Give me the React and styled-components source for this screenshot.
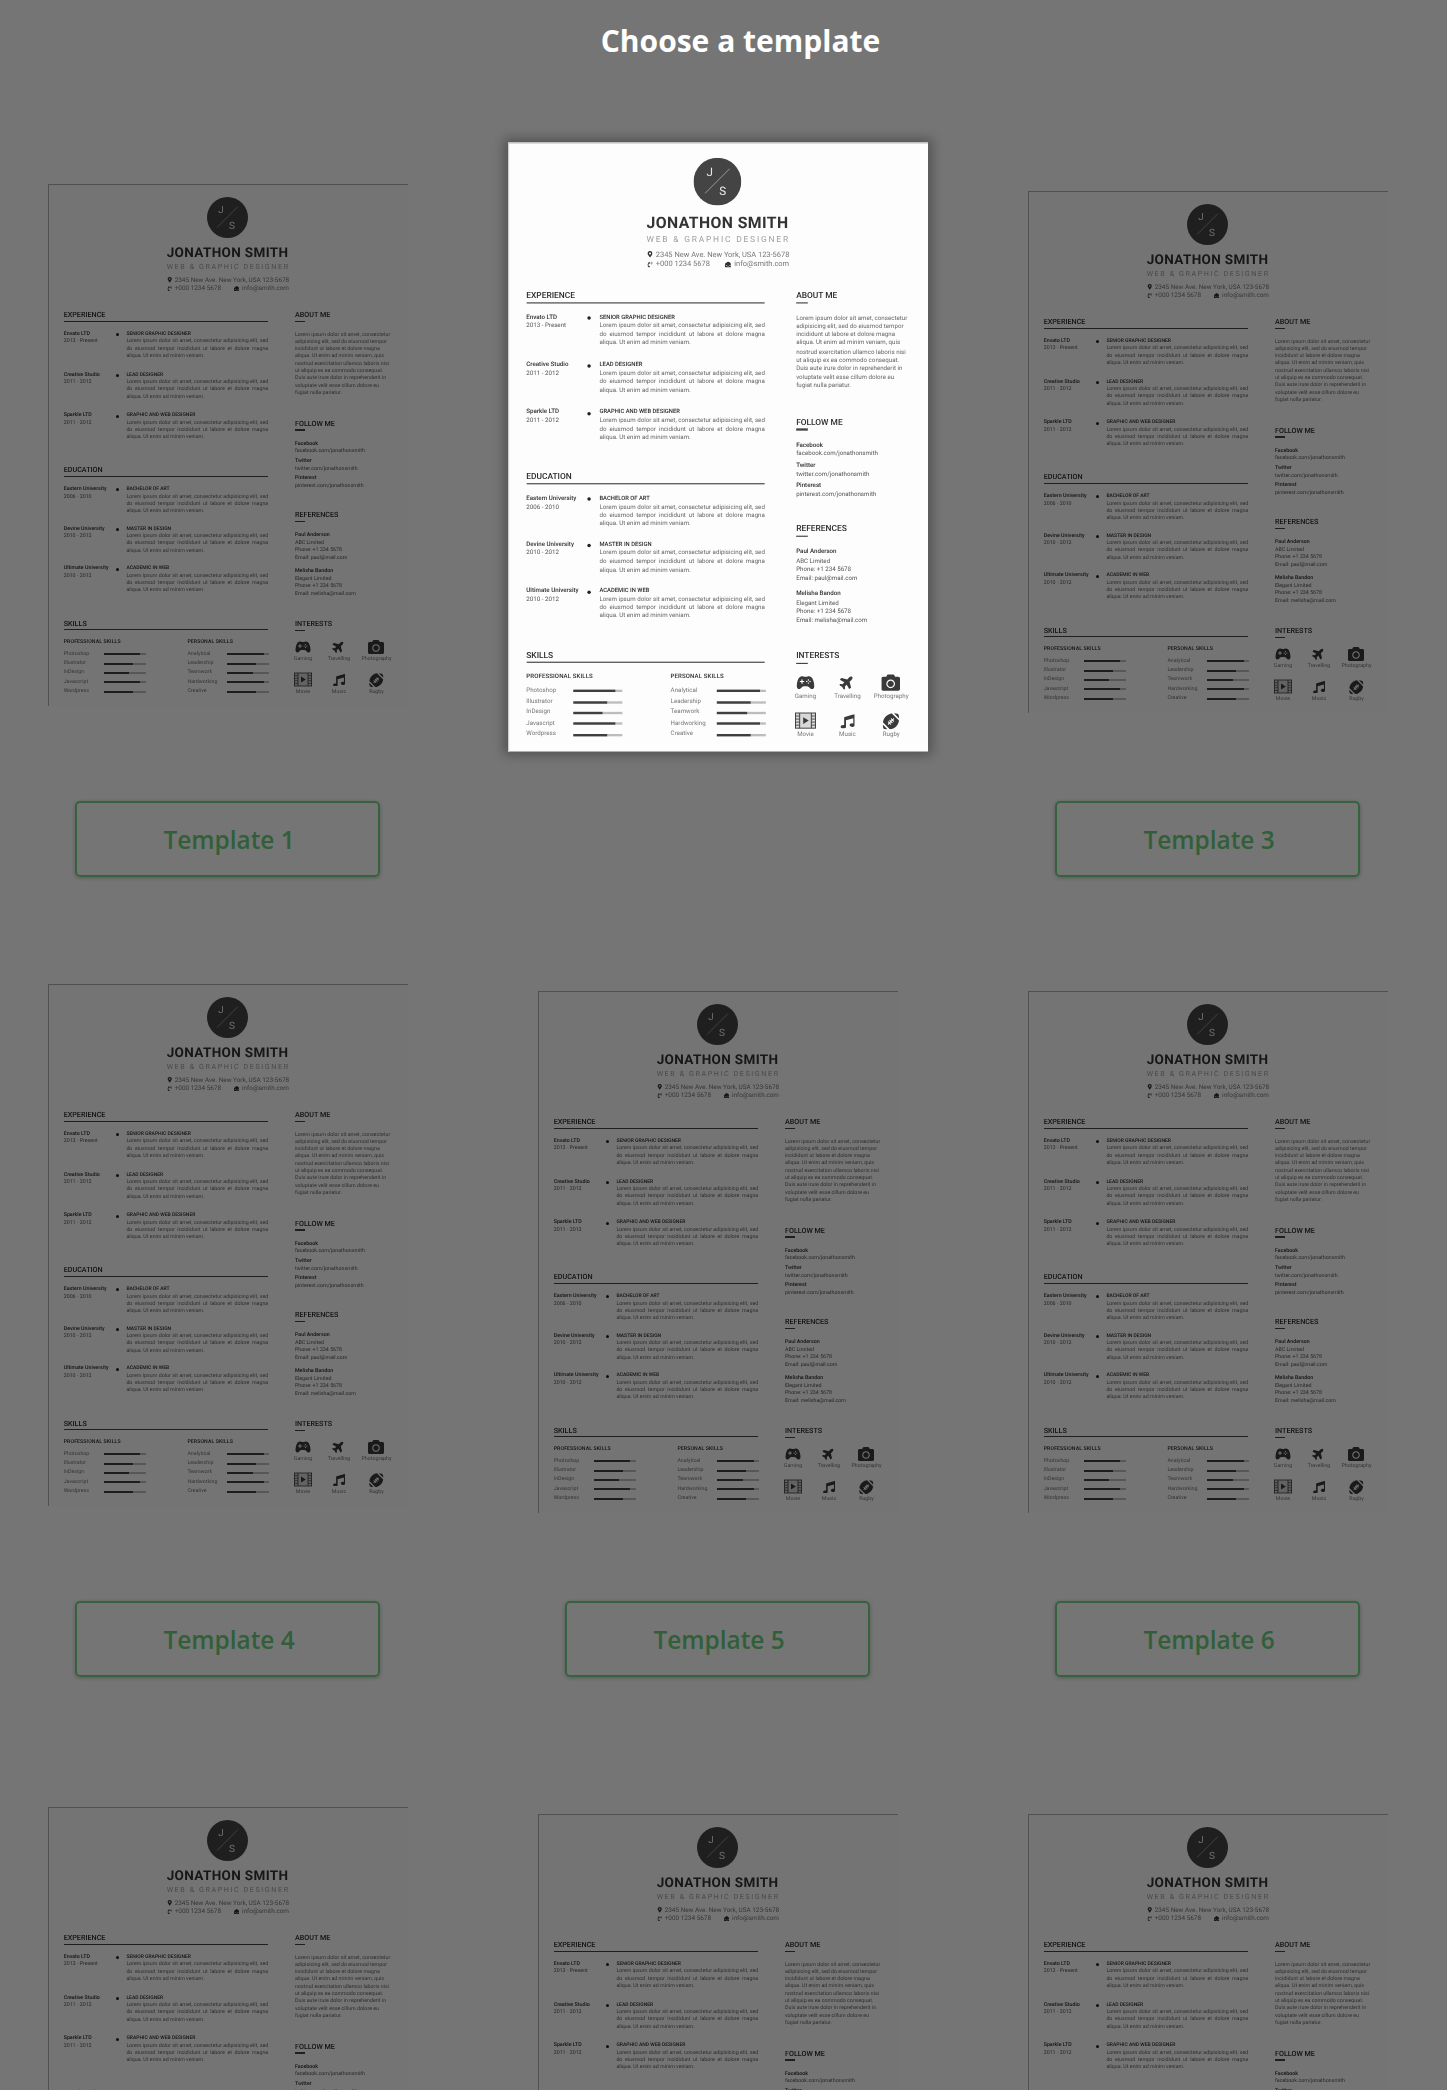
import React from 'react'
import styled, { createGlobalStyle } from 'styled-components'
import { FaCamera, FaFootballBall, FaMapMarkerAlt, FaMusic, FaPhoneVolume, FaPlane, FaEnvelopeOpen } from 'react-icons/fa'
import { IoGameController } from 'react-icons/io5'

const GlobalStyle = createGlobalStyle`
  html, body {
    margin: 0;
    padding: 0;
    background: #ffffff;
  }
`

// Page and dimmer
const Page = styled.div`
  position: relative;
  width: 1447px;
  height: 2090px;
  overflow: hidden;
  background: #ffffff;
  font-family: 'Open Sans', sans-serif;
`

const Dimmer = styled.div`
  position: absolute;
  inset: 0;
  z-index: 1;
  background: rgba(0, 0, 0, 0.54);
`

const Title = styled.h1`
  position: relative;
  z-index: 2;
  margin: 0;
  padding: 20px 0 0 34px;
  height: 41px;
  font-size: 30px;
  line-height: 41px;
  font-weight: 700;
  text-align: center;
  color: #ffffff;
`

const Gallery = styled.div`
  display: flex;
  flex-direction: column;
  gap: 107px;
  margin-top: 123px;
  padding-left: 48px;
`

const Row = styled.div`
  display: grid;
  grid-template-columns: repeat(3, 360px);
  column-gap: 130px;
  margin-top: ${(p) => (p.$late ? '23px' : '0')};
`

const Cell = styled.div`
  display: flex;
  flex-direction: column;
  align-items: center;
  height: 693px;
`

const PickButton = styled.button`
  box-sizing: border-box;
  width: 305px;
  height: 76px;
  margin-top: auto;
  margin-right: 1px;
  padding: 0 0 0 3px;
  border: 2px solid #74d886;
  border-radius: 5px;
  background: transparent;
  box-shadow: 0 1px 4px rgba(0, 0, 0, 0.25);
  font-family: 'Open Sans', sans-serif;
  font-size: 24.4px;
  font-weight: 600;
  color: #6ad07c;
`

// The resume sheet, drawn at 360x522
const Sheet = styled.div`
  position: relative;
  z-index: ${(p) => (p.$featured ? 2 : 0)};
  box-sizing: border-box;
  flex: none;
  width: 360px;
  height: 522px;
  margin-top: ${(p) => (p.$low ? '7px' : '0')};
  padding: 13.4px 0 0 15.7px;
  overflow: hidden;
  background: #fdfdfd;
  box-shadow: ${(p) =>
    p.$featured
      ? 'inset 1px 1px 0 #cfcfcf, 0 0 9px 3px rgba(0, 0, 0, 0.3)'
      : 'inset 1px 1px 0 #b0b0b0'};
  transform: ${(p) => (p.$featured ? 'translateY(-5px) scale(1.1667)' : 'none')};
  filter: blur(0.45px);
  font-family: Roboto, sans-serif;
  font-size: 5.3px;
  line-height: 7.3px;
  color: #555555;
  text-rendering: geometricPrecision;
`

const Header = styled.header`
  display: flex;
  flex-direction: column;
  width: 122.3px;
  margin-left: 103px;
`

const Logo = styled.svg`
  display: block;
  width: 41px;
  height: 41px;
  margin-left: 40.6px;
`

const Name = styled.div`
  margin-top: 7.6px;
  font-size: 13.5px;
  line-height: 14px;
  font-weight: 700;
  letter-spacing: 0.37px;
  white-space: nowrap;
  color: #333333;
`

const Role = styled.div`
  margin-top: 2.7px;
  font-size: 7.2px;
  line-height: 8px;
  font-weight: 400;
  letter-spacing: 1.56px;
  white-space: nowrap;
  color: #a0a0a0;
`

const ContactLine = styled.div`
  display: flex;
  justify-content: space-between;
  margin-top: ${(p) => (p.$first ? '5px' : '0')};
  font-size: 6.4px;
  line-height: 8.7px;
  color: #777777;
  white-space: nowrap;
`

const ContactItem = styled.span`
  display: flex;
  align-items: center;
  gap: 2.5px;

  svg {
    width: 5.5px;
    height: 5.5px;
    color: #333333;
  }
`

const Body = styled.div`
  display: grid;
  grid-template-columns: 204.5px 100px;
  column-gap: 26.8px;
  margin-top: 17px;
`

const Column = styled.div`
  display: flex;
  flex-direction: column;
`

const Section = styled.section`
  margin-bottom: ${(p) => p.$after || '0'};
`

const SectionHead = styled.h2`
  margin: 0 0 ${(p) => p.$space || '9.5px'};
  height: 10.5px;
  font-size: 7.2px;
  line-height: 9px;
  font-weight: 500;
  color: #2b2b2b;
  border-bottom: 1.5px solid #444444;
`

const ShortHead = styled(SectionHead)`
  position: relative;
  border-bottom: 0;
  height: 12px;

  &::after {
    content: '';
    position: absolute;
    left: 0;
    bottom: 0;
    width: 10px;
    height: 1.5px;
    background: #444444;
  }
`

const Job = styled.div`
  display: grid;
  grid-template-columns: 52px 10.7px 1fr;
  margin-bottom: ${(p) => p.$gap};

  &:last-child {
    margin-bottom: 0;
  }
`

const Bold = styled.div`
  font-weight: 500;
  color: #2e2e2e;
  white-space: nowrap;
`

const Dot = styled.i`
  display: block;
  width: 3px;
  height: 3px;
  margin-top: 2.15px;
  border-radius: 50%;
  background: #222222;
`

const JobTitle = styled(Bold)`
  font-size: 5px;
  text-transform: uppercase;
`

const TextLine = styled.div`
  color: #666666;
  white-space: nowrap;
  text-align: justify;
  text-align-last: ${(p) => (p.$fill ? 'justify' : 'left')};
`

const LinkItem = styled.div`
  margin-bottom: 1.9px;
  line-height: 7.7px;
`

const RefItem = styled.div`
  margin-bottom: 4.8px;
  line-height: 7.8px;
`

const SkillColumns = styled.div`
  display: grid;
  grid-template-columns: 123.7px 82px;
`

const SkillHead = styled(Bold)`
  margin-bottom: 3.5px;
  line-height: 7px;
  font-size: 5.2px;
  letter-spacing: 0.1px;
  text-transform: uppercase;
`

const SkillRow = styled.div`
  display: grid;
  grid-template-columns: 40px 42px;
  align-items: center;
  height: 9.3px;
  color: #777777;
`

const Bar = styled.div`
  height: 2px;
  background: #bdbdbd;

  &::before {
    content: '';
    display: block;
    width: ${(p) => p.$value}%;
    height: 100%;
    background: #3f3f3f;
  }
`

const Interests = styled.div`
  display: grid;
  grid-template-columns: 16px 56px 19px;
  grid-auto-rows: 33.4px;
  justify-items: center;
`

const Interest = styled.div`
  display: flex;
  flex-direction: column;
  align-items: center;
  gap: 2px;
  white-space: nowrap;
  color: #777777;
`

const IconBox = styled.div`
  display: flex;
  align-items: center;
  justify-content: center;
  width: 18px;
  height: 15px;
  color: #3a3a3a;

  svg {
    display: block;
    width: ${(p) => p.$size || 15}px;
    height: ${(p) => p.$size || 15}px;
  }
`

const jobs = [
  { place: 'Envato LTD', when: '2013 - Present', title: 'Senior Graphic Designer' },
  { place: 'Creative Studio', when: '2011 - 2012', title: 'Lead Designer' },
  { place: 'Sparkle LTD', when: '2011 - 2012', title: 'Graphic and Web Designer' },
]

const schools = [
  { place: 'Eastern University', when: '2006 - 2010', title: 'Bachelor of Art' },
  { place: 'Devine University', when: '2010 - 2012', title: 'Master in Design' },
  { place: 'Ultimate University', when: '2010 - 2012', title: 'Academic in Web' },
]

const jobLines = [
  'Lorem ipsum dolor sit amet, consectetur adipisicing elit, sed',
  'do eiusmod tempor incididunt ut labore et dolore magna',
  'aliqua. Ut enim ad minim veniam.',
]

const aboutLines = [
  'Lorem ipsum dolor sit amet, consectetur',
  'adipisicing elit, sed do eiusmod tempor',
  'incididunt ut labore et dolore magna',
  'aliqua. Ut enim ad minim veniam, quis',
  'nostrud exercitation ullamco laboris nisi',
  'ut aliquip ex ea commodo consequat.',
  'Duis aute irure dolor in reprehenderit in',
  'voluptate velit esse cillum dolore eu',
  'fugiat nulla pariatur.',
]

const links = [
  ['Facebook', 'facebook.com/jonathonsmith'],
  ['Twitter', 'twitter.com/jonathonsmith'],
  ['Pinterest', 'pinterest.com/jonathonsmith'],
]

const references = [
  ['Paul Anderson', 'ABC Limited', 'paul@mail.com'],
  ['Melisha Bandon', 'Elegant Limited', 'melisha@mail.com'],
]

const proSkills = [
  ['Photoshop', 87],
  ['Illustrator', 69],
  ['InDesign', 61],
  ['Javascript', 87],
  ['Wordpress', 69],
]

const softSkills = [
  ['Analytical', 87],
  ['Leadership', 69],
  ['Teamwork', 61],
  ['Hardworking', 87],
  ['Creative', 69],
]

function FilmIcon() {
  return (
    <svg viewBox="0 0 18 15" style={{ width: 18, height: 15 }}>
      <rect x="0.4" y="1" width="17.2" height="13" fill="#d8d8d8" stroke="currentColor" strokeWidth="0.8" />
      <path d="M4 1v13M14 1v13" stroke="currentColor" strokeWidth="0.8" />
      <path d="M0.4 3.6H4M0.4 6.2H4M0.4 8.8H4M0.4 11.4H4M14 3.6h3.6M14 6.2h3.6M14 8.8h3.6M14 11.4h3.6" stroke="currentColor" strokeWidth="0.7" />
      <path d="M7 4.6v5.8l4.8-2.9z" fill="currentColor" />
    </svg>
  )
}

const interests = [
  ['Gaming', <IoGameController key="g" />, 16],
  ['Travelling', <FaPlane key="t" style={{ transform: 'rotate(-45deg)' }} />, 13],
  ['Photography', <FaCamera key="p" />, 16],
  ['Movie', <FilmIcon key="m" />, 15],
  ['Music', <FaMusic key="u" />, 12.5],
  ['Rugby', <FaFootballBall key="r" />, 14.5],
]

function JobList({ items, gap }) {
  return items.map((item) => (
    <Job key={item.place} $gap={gap}>
      <div>
        <Bold>{item.place}</Bold>
        <div>{item.when}</div>
      </div>
      <Dot />
      <div>
        <JobTitle>{item.title}</JobTitle>
        {jobLines.map((line, i) => (
          <TextLine key={line} $fill={i < 2}>
            {line}
          </TextLine>
        ))}
      </div>
    </Job>
  ))
}

function SkillList({ heading, items }) {
  return (
    <div>
      <SkillHead>{heading}</SkillHead>
      {items.map(([label, value]) => (
        <SkillRow key={label}>
          <span>{label}</span>
          <Bar $value={value} />
        </SkillRow>
      ))}
    </div>
  )
}

function Resume({ featured, low }) {
  return (
    <Sheet $featured={featured} $low={low}>
      <Header>
        <Logo viewBox="0 0 41 41">
          <circle cx="20.5" cy="20.5" r="20.5" fill="#444444" />
          <line x1="31" y1="9.5" x2="10" y2="30.5" stroke="#d8d8d8" strokeWidth="0.5" />
          <text x="14" y="15.5" fill="#e8e8e8" fontSize="10" fontFamily="Roboto, sans-serif" textAnchor="middle">J</text>
          <text x="25" y="32" fill="#e8e8e8" fontSize="10" fontFamily="Roboto, sans-serif" textAnchor="middle">S</text>
        </Logo>
        <Name>JONATHON SMITH</Name>
        <Role>WEB &amp; GRAPHIC DESIGNER</Role>
        <ContactLine $first>
          <ContactItem>
            <FaMapMarkerAlt />
            2345 New Ave. New York, USA 123-5678
          </ContactItem>
        </ContactLine>
        <ContactLine>
          <ContactItem>
            <FaPhoneVolume />
            +000 1234 5678
          </ContactItem>
          <ContactItem>
            <FaEnvelopeOpen />
            info@smith.com
          </ContactItem>
        </ContactLine>
      </Header>

      <Body>
        <Column>
          <Section $after="23.65px">
            <SectionHead>EXPERIENCE</SectionHead>
            <JobList items={jobs} gap="11.5px" />
          </Section>
          <Section $after="24.2px">
            <SectionHead>EDUCATION</SectionHead>
            <JobList items={schools} gap="10.4px" />
          </Section>
          <Section>
            <SectionHead $space="9px">SKILLS</SectionHead>
            <SkillColumns>
              <SkillList heading="Professional Skills" items={proSkills} />
              <SkillList heading="Personal Skills" items={softSkills} />
            </SkillColumns>
          </Section>
        </Column>

        <Column>
          <Section $after="21.45px">
            <ShortHead>ABOUT ME</ShortHead>
            {aboutLines.map((line) => (
              <TextLine key={line}>{line}</TextLine>
            ))}
          </Section>
          <Section $after="17.5px">
            <ShortHead $space="10px">FOLLOW ME</ShortHead>
            {links.map(([site, url]) => (
              <LinkItem key={site}>
                <Bold>{site}</Bold>
                <div>{url}</div>
              </LinkItem>
            ))}
          </Section>
          <Section $after="15.2px">
            <ShortHead $space="9.8px">REFERENCES</ShortHead>
            {references.map(([name, company, mail]) => (
              <RefItem key={name}>
                <Bold>{name}</Bold>
                <div>{company}</div>
                <div>Phone: +1 234 5678</div>
                <div>Email: {mail}</div>
              </RefItem>
            ))}
          </Section>
          <Section>
            <ShortHead $space="8px">INTERESTS</ShortHead>
            <Interests>
              {interests.map(([label, icon, size]) => (
                <Interest key={label}>
                  <IconBox $size={size}>{icon}</IconBox>
                  <span>{label}</span>
                </Interest>
              ))}
            </Interests>
          </Section>
        </Column>
      </Body>
    </Sheet>
  )
}

export default function App() {
  return (
    <Page>
      <GlobalStyle />
      <Dimmer />
      <Title>Choose a template</Title>
      <Gallery>
        <Row>
          <Cell>
            <Resume />
            <PickButton>Template 1</PickButton>
          </Cell>
          <Cell>
            <Resume featured low />
          </Cell>
          <Cell>
            <Resume low />
            <PickButton>Template 3</PickButton>
          </Cell>
        </Row>
        <Row>
          <Cell>
            <Resume />
            <PickButton>Template 4</PickButton>
          </Cell>
          <Cell>
            <Resume low />
            <PickButton>Template 5</PickButton>
          </Cell>
          <Cell>
            <Resume low />
            <PickButton>Template 6</PickButton>
          </Cell>
        </Row>
        <Row $late>
          <Cell>
            <Resume />
          </Cell>
          <Cell>
            <Resume low />
          </Cell>
          <Cell>
            <Resume low />
          </Cell>
        </Row>
      </Gallery>
    </Page>
  )
}
